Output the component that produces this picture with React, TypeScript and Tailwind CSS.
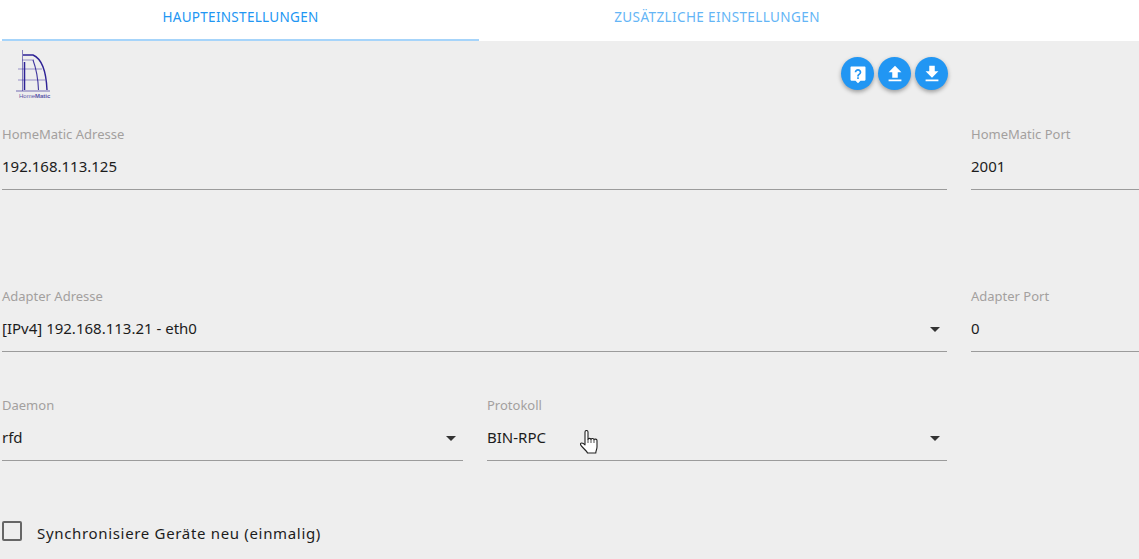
import React from "react";

const Field = ({ label, value, select, className }: { label: string; value: string; select?: boolean; className?: string }) => (
  <div className={"flex h-[69px] flex-col border-b border-[#9b9b9b] " + (className || "")}>
    <label className="h-[34px] pt-[5px] text-[13px] leading-[16px] text-[#a3a09e]">{label}</label>
    <div className="flex h-[34px] items-start justify-between text-[15px] leading-[22px] text-[#1c1c1c]">
      <span>{value}</span>
      {select && (
        <svg width="10" height="5" viewBox="0 0 10 5" className="mt-[10px] mr-[7px]">
          <path d="M0 0h10L5 5z" fill="#333" />
        </svg>
      )}
    </div>
  </div>
);

const FabIcon = ({ size, children }: { size: number; children: React.ReactNode }) => (
  <button className="flex h-[33px] w-[33px] items-center justify-center rounded-full bg-[#2196f3] shadow-[0_2px_4px_rgba(0,0,0,0.35)]">
    <svg width={size} height={size} viewBox="0 0 24 24" fill="#fff">
      {children}
    </svg>
  </button>
);

const Logo = () => (
  <svg width="36" height="50" viewBox="0 0 36 50" fill="none" stroke="#2e2296">
    <path d="M7.500 0v41" strokeWidth="0.8" opacity="0.7" />
    <path d="M8 5h10c7 3 13 12 14 35" strokeWidth="1.400" />
    <path d="M9.500 12v28" strokeWidth="1.500" />
    <path d="M7 10h12M3 19h24M3 30h27" strokeWidth="0.7" opacity="0.65" />
    <path d="M18 10c3 8 5 18 5.500 30" strokeWidth="1.100" opacity="0.9" />
    <path d="M1 41h34" strokeWidth="0.8" opacity="0.8" />
    <text x="4" y="47.500" fontSize="6" fill="#5a55a8" stroke="none" fontFamily="Liberation Sans, sans-serif">
      Home<tspan fontWeight="700">Matic</tspan>
    </text>
  </svg>
);

export default function App() {
  return (
    <div className="h-[559px] w-[1139px] overflow-hidden bg-[#eeeeee] font-['Noto_Sans',sans-serif]">
      <div className="flex h-[41px] bg-white pl-[2px]">
        <div className="flex h-[41px] w-[477px] items-center justify-center border-b-2 border-[#a6d4fa] pb-[4px] text-[13.500px] tracking-[0.3px] text-[#2196f3]">
          HAUPTEINSTELLUNGEN
        </div>
        <div className="flex h-[41px] w-[476px] items-center justify-center pb-[6px] text-[13.500px] tracking-[0.4px] text-[#64b5f6]">
          ZUSÄTZLICHE EINSTELLUNGEN
        </div>
      </div>

      <div className="pl-[2px]">
        <div className="flex h-[80px] w-[946px] items-start justify-between">
          <div className="ml-[13px] mt-[9px]">
            <Logo />
          </div>
          <div className="mt-[16px] flex gap-[4px]">
            <FabIcon size={20}>
              <path
                fillRule="evenodd"
                d="M4 3h16a1 1 0 0 1 1 1v15a1 1 0 0 1-1 1h-5l-3 3-3-3H4a1 1 0 0 1-1-1V4a1 1 0 0 1 1-1zm7 13v2h2v-2h-2zm1-10c-2.200 0-4 1.800-4 4h2c0-1.100.9-2 2-2s2 .9 2 2c0 2-3 1.800-3 5h2c0-2.200 3-2.500 3-5 0-2.200-1.800-4-4-4z"
              />
            </FabIcon>
            <FabIcon size={22}>
              <path d="M9 16h6v-6h4l-7-7-7 7h4zm-4 2h14v2H5z" />
            </FabIcon>
            <FabIcon size={22}>
              <path d="M19 9h-4V3H9v6H5l7 7 7-7zM5 18v2h14v-2H5z" />
            </FabIcon>
          </div>
        </div>

        <div className="flex gap-[24px]">
          <Field className="w-[945px] shrink-0" label="HomeMatic Adresse" value="192.168.113.125" />
          <Field className="w-[200px] shrink-0" label="HomeMatic Port" value="2001" />
        </div>

        <div className="mt-[93px] flex gap-[24px]">
          <Field className="w-[945px] shrink-0" label="Adapter Adresse" value="[IPv4] 192.168.113.21 - eth0" select />
          <Field className="w-[200px] shrink-0" label="Adapter Port" value="0" />
        </div>

        <div className="mt-[40px] flex gap-[24px]">
          <Field className="w-[461px]" label="Daemon" value="rfd" select />
          <div className="relative w-[460px]">
            <Field label="Protokoll" value="BIN-RPC" select />
            <svg width="18" height="24" viewBox="0 0 18 24" className="absolute left-[93px] top-[38px]" fill="#fff" stroke="#222" strokeWidth="1.100" strokeLinejoin="round">
              <path d="M5 2c0-2 3-2 3 0v7.500c0-1.500 3-1.500 3 0 0-1.300 3-1.300 3 .3 0-1 3-1 3 .7v6.500c0 2.500-1.200 3.500-1.200 6H7.500c-.5-2-6.500-6.500-7-8.500-.3-1.800 2-2.300 4.500 .3z" />
              <path d="M8 9.500v3.500M11 9.500v3.500M14 9.800v3.200" fill="none" strokeWidth="0.8" />
            </svg>
          </div>
        </div>

        <div className="mt-[61px] flex items-start">
          <span className="-mt-[1px] h-[20px] w-[20px] rounded-[2px] border-[2.500px] border-[#666666]" />
          <span className="ml-[15px] text-[15px] leading-[22px] tracking-[0.67px] text-[#1c1c1c]">Synchronisiere Geräte neu (einmalig)</span>
        </div>
      </div>
    </div>
  );
}
